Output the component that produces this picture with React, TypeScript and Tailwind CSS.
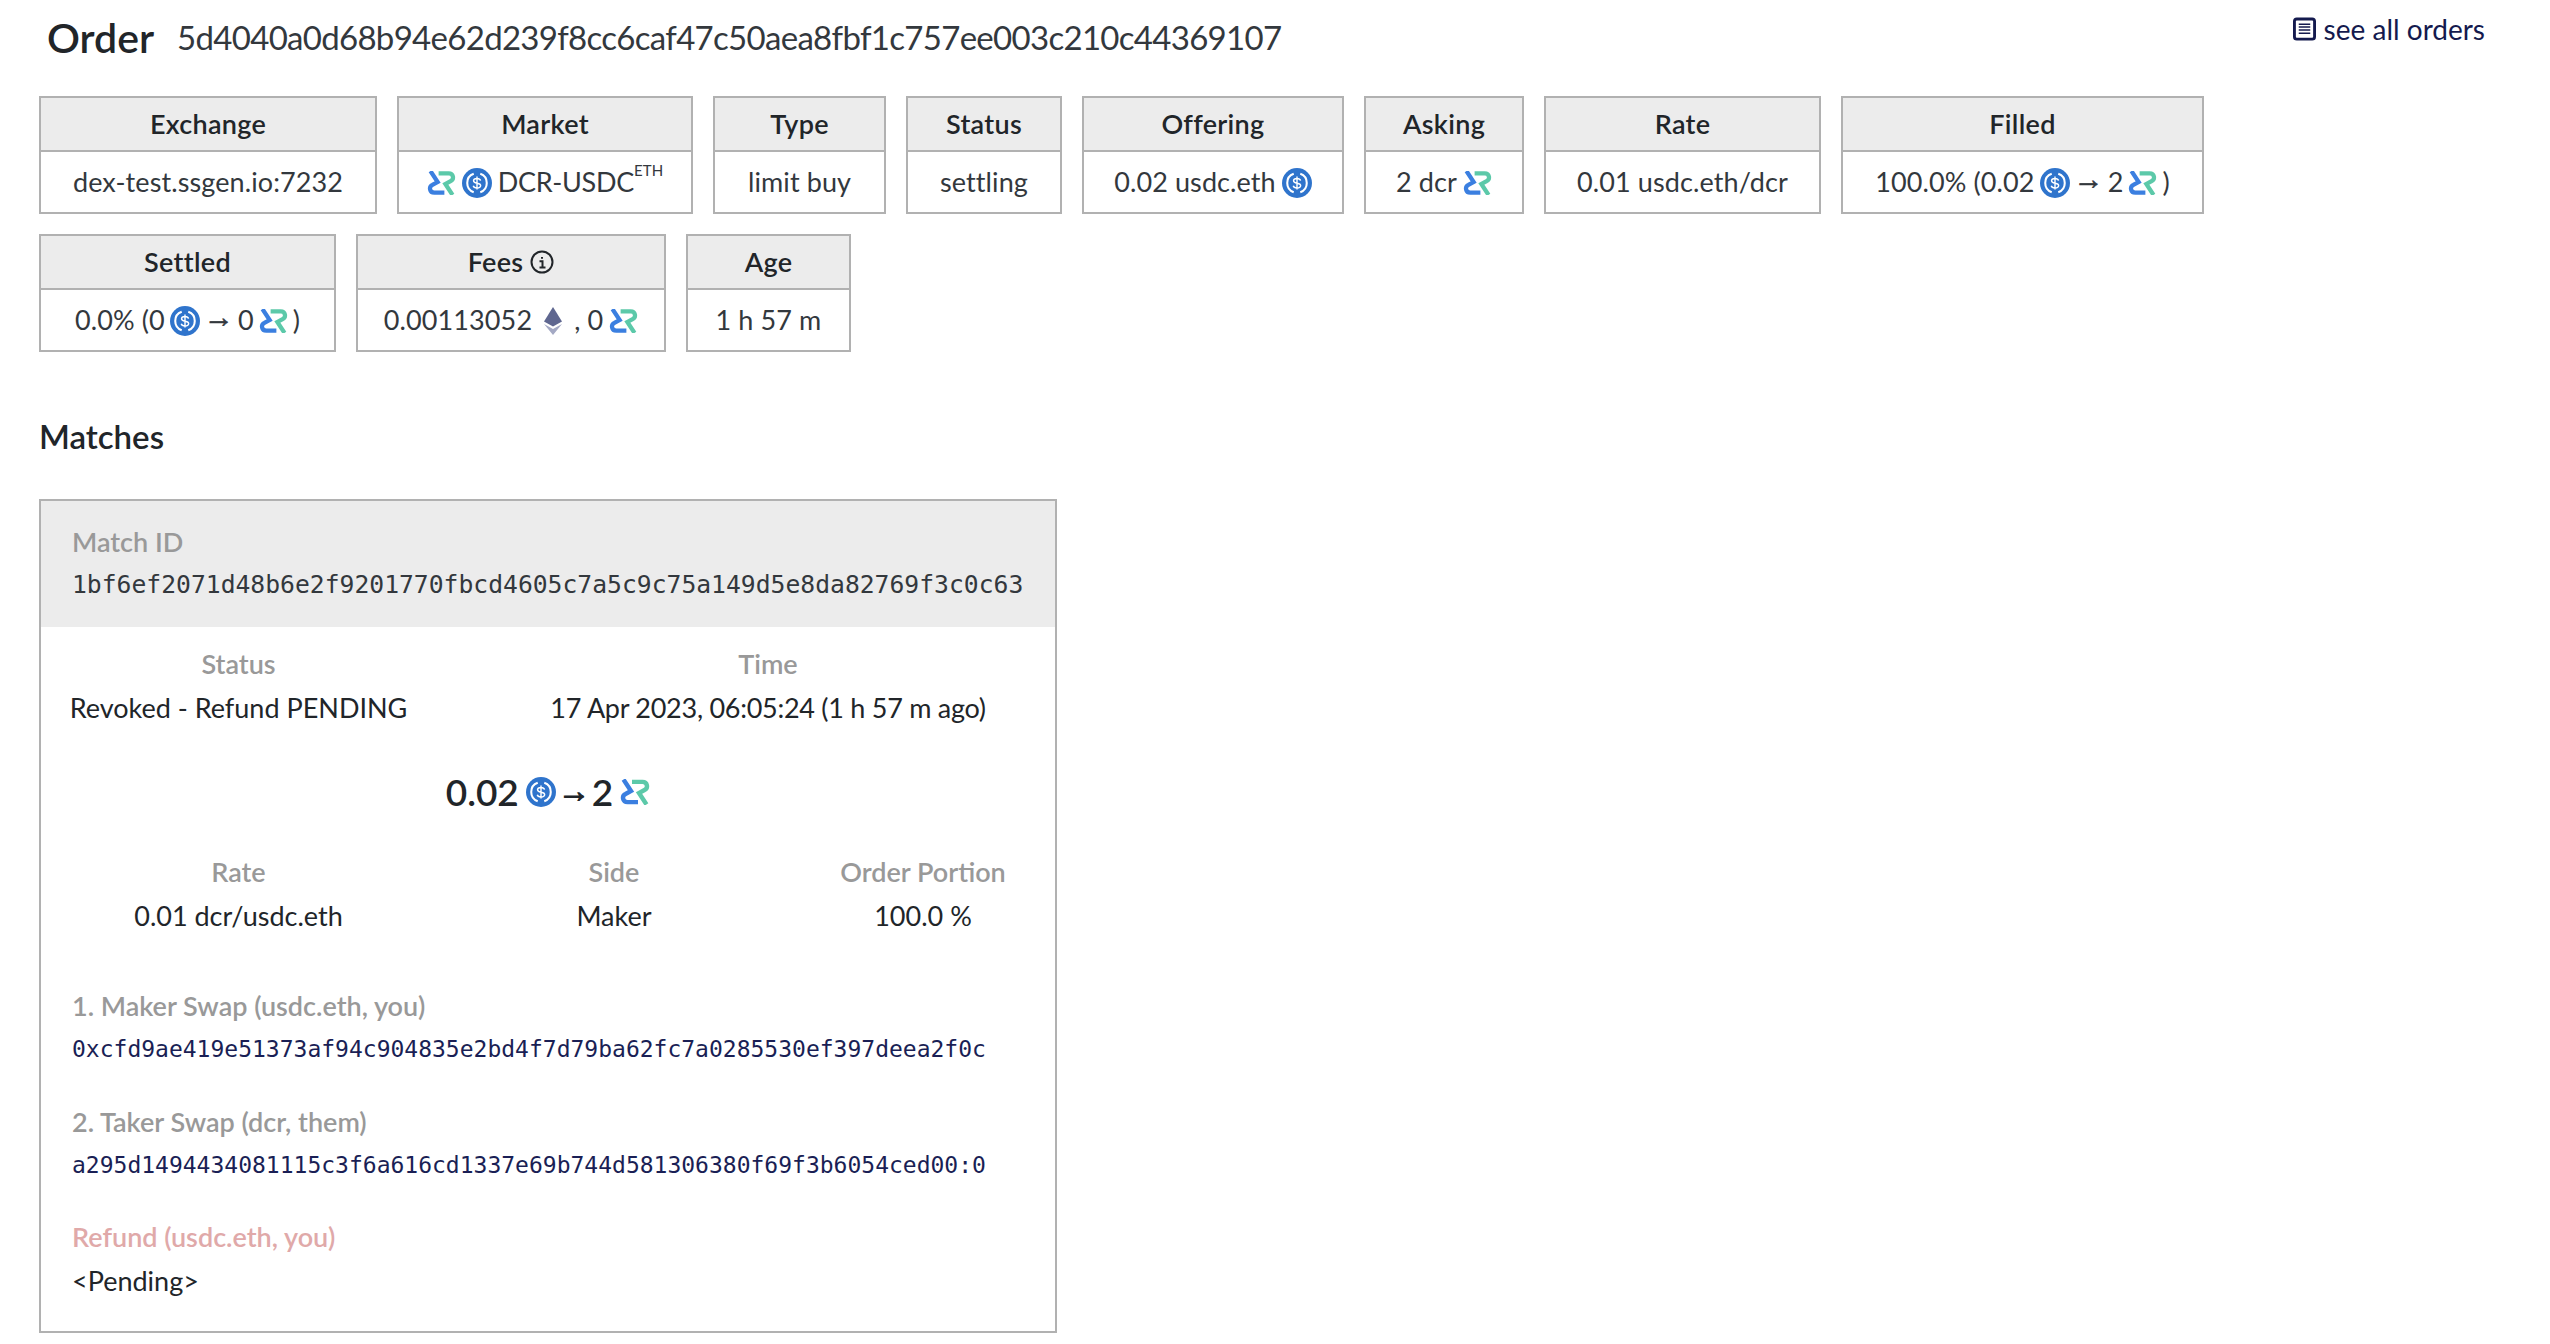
import React from 'react';

const font = "font-['Lato','Liberation_Sans',sans-serif]";

const Dcr = ({ className = 'w-[29px] h-[24px]' }: { className?: string }) => (
  <svg viewBox="0 0 30 25" className={`inline-block shrink-0 ${className}`} fill="none" strokeWidth="4.400">
    <path d="M12 2.400H22.500C27.500 2.400 28.500 8.500 24.500 10.500L19 13.500L26.500 25" stroke="#5cc9a9" />
    <path d="M18 22.600H7.500C2.500 22.600 1.500 16.500 5.500 14.500L11 11.500L3.500 0" stroke="#3b7fe0" />
  </svg>
);

const Usdc = ({ className = 'w-[30px] h-[30px]' }: { className?: string }) => (
  <svg viewBox="0 0 32 32" className={`inline-block shrink-0 ${className}`} fill="none">
    <circle cx="16" cy="16" r="16" fill="#2f74cc" />
    <path d="M12.500 6.200a10.400 10.400 0 0 0 0 19.600M19.500 6.200a10.400 10.400 0 0 1 0 19.600" stroke="#fff" strokeWidth="2.200" />
    <path d="M19.800 13.400c-.4-1.500-1.900-2.200-3.800-2.200-2.200 0-3.700 1-3.700 2.500 0 3.700 7.600 1.500 7.600 5 0 1.600-1.600 2.600-3.900 2.600-2.100 0-3.600-.8-4-2.400M16 9v14" stroke="#fff" strokeWidth="1.500" />
  </svg>
);

const Eth = () => (
  <svg viewBox="0 0 18 28" className="inline-block shrink-0 w-[18px] h-[28px]">
    <path d="M9 0 0 14.500 9 19.500 18 14.500Z" fill="#5f6790" />
    <path d="M0 17 9 28 18 17 9 22Z" fill="#a4a9c4" />
  </svg>
);

const InfoIcon = () => (
  <svg viewBox="0 0 24 24" className="inline-block w-[24px] h-[24px] ml-[7px]" fill="none" stroke="#212529" strokeWidth="2">
    <circle cx="12" cy="12" r="10.500" />
    <path d="M12 7v1.800M9.500 11.300H12.500V17M9.500 17.500h6" />
  </svg>
);

const ListIcon = () => (
  <svg viewBox="0 0 24 24" className="w-[23px] h-[24px] mr-[8px]" fill="none" stroke="#141a4e">
    <rect x="1.500" y="1.500" width="21" height="21" rx="2.500" strokeWidth="3" />
    <path d="M6 7h12M6 10h12M6 13h12M6 16.500h12" strokeWidth="1.500" />
  </svg>
);

const Arrow = () => (
  <span className="mx-[4px] -mt-[8px] font-['Liberation_Sans',sans-serif] text-[30px] font-bold [-webkit-text-stroke:0.6px_#33383d]">→</span>
);

const Cell = ({ label, width, children }: { label: React.ReactNode; width: string; children: React.ReactNode }) => (
  <div className={`${width} h-[118px] border-2 border-[#b1b1b1] flex flex-col`}>
    <div className="h-[54px] shrink-0 bg-[#ececec] border-b-2 border-[#b1b1b1] flex items-center justify-center font-semibold text-[#212529] tracking-[0.3px]">
      {label}
    </div>
    <div className="flex-1 flex items-center justify-center text-[#33383d] whitespace-nowrap pt-[1px] tracking-[0.1px]">{children}</div>
  </div>
);

const Label = ({ children }: { children: React.ReactNode }) => (
  <div className="h-[42px] flex items-center text-[#999999] font-semibold">{children}</div>
);

const Value = ({ children, className = '' }: { children: React.ReactNode; className?: string }) => (
  <div className={`h-[42px] leading-[45px] ${className}`}>{children}</div>
);

const Hash = ({ children }: { children: React.ReactNode }) => (
  <div className="h-[42px] pt-[3px] flex items-center font-['DejaVu_Sans_Mono',monospace] text-[23px] text-[#1a1f55] whitespace-nowrap">
    {children}
  </div>
);

export default function App() {
  return (
    <div className={`${font} bg-white w-[2550px] h-[1344px] overflow-hidden pl-[39px] text-[27px] text-[#212529]`}>
      {/* Title */}
      <div className="h-[96px] flex justify-between pl-[8px] pr-[65px]">
        <div className="flex items-center h-[76px]">
          <h1 className="text-[41px] font-semibold">Order</h1>
          <span className="ml-[23px] text-[33px] tracking-[-0.7px] text-[#33383d]">
            5d4040a0d68b94e62d239f8cc6caf47c50aea8fbf1c757ee003c210c44369107
          </span>
        </div>
        <a className="flex items-center h-[58px] text-[#141a4e] text-[28px]">
          <ListIcon />
          see all orders
        </a>
      </div>

      {/* Order summary */}
      <div className="flex gap-[20px]">
        <Cell label="Exchange" width="w-[338px]">dex-test.ssgen.io:7232</Cell>
        <Cell label="Market" width="w-[296px]">
          <Dcr />
          <span className="w-[6px]" />
          <Usdc />
          <span className="ml-[6px] tracking-[-0.3px]">DCR-USDC</span>
          <sup className="text-[15px] -mt-[10px]">ETH</sup>
        </Cell>
        <Cell label="Type" width="w-[173px]">limit buy</Cell>
        <Cell label="Status" width="w-[156px]">settling</Cell>
        <Cell label="Offering" width="w-[262px]">
          0.02 usdc.eth
          <span className="w-[6px]" />
          <Usdc />
        </Cell>
        <Cell label="Asking" width="w-[160px]">
          2 dcr
          <span className="w-[6px]" />
          <Dcr />
        </Cell>
        <Cell label="Rate" width="w-[277px]">0.01 usdc.eth/dcr</Cell>
        <Cell label="Filled" width="w-[363px]">
          100.0% (0.02
          <span className="w-[5px]" />
          <Usdc />
          <Arrow />2
          <span className="w-[5px]" />
          <Dcr />
          <span className="ml-[5px]">)</span>
        </Cell>
      </div>
      <div className="flex gap-[20px] mt-[20px]">
        <Cell label="Settled" width="w-[297px]">
          0.0% (0
          <span className="w-[5px]" />
          <Usdc />
          <Arrow />0
          <span className="w-[5px]" />
          <Dcr />
          <span className="ml-[5px]">)</span>
        </Cell>
        <Cell
          label={
            <>
              Fees
              <InfoIcon />
            </>
          }
          width="w-[310px]"
        >
          0.00113052
          <span className="w-[12px]" />
          <Eth />
          <span className="w-[12px]" />, 0
          <span className="w-[6px]" />
          <Dcr />
        </Cell>
        <Cell label="Age" width="w-[165px]">1 h 57 m</Cell>
      </div>

      {/* Matches */}
      <h2 className="mt-[64px] h-[42px] flex items-center text-[33px] font-semibold">Matches</h2>

      <div className="mt-[41px] w-[1018px] h-[834px] border-2 border-[#b1b1b1]">
        <div className="h-[126px] bg-[#ececec] pt-[20px] pl-[31px]">
          <Label>Match ID</Label>
          <div className="h-[42px] pt-[2px] flex items-center font-['DejaVu_Sans_Mono',monospace] text-[24.700px] text-[#33383d] whitespace-nowrap">
            1bf6ef2071d48b6e2f9201770fbcd4605c7a5c9c75a149d5e8da82769f3c0c63
          </div>
        </div>

        <div className="grid grid-cols-[395px_464px] gap-x-[100px] text-center mt-[16px]">
          <div>
            <Label><span className="mx-auto">Status</span></Label>
            <Value>Revoked - Refund PENDING</Value>
          </div>
          <div>
            <Label><span className="mx-auto">Time</span></Label>
            <Value className="tracking-[-0.27px]">17 Apr 2023, 06:05:24 (1 h 57 m ago)</Value>
          </div>
        </div>

        <div className="mt-[44px] h-[42px] flex items-center justify-center text-[37px] font-semibold gap-[7px]">
          0.02
          <Usdc />
          <span className="-mx-[5px] -mt-[2px] font-['Liberation_Sans',sans-serif] text-[32px] font-bold [-webkit-text-stroke:1.200px_#212529]">→</span>2
          <Dcr className="w-[30px] h-[26px]" />
        </div>

        <div className="flex text-center mt-[38px]">
          <div className="w-[395px]">
            <Label><span className="mx-auto">Rate</span></Label>
            <Value>0.01 dcr/usdc.eth</Value>
          </div>
          <div className="ml-[78px] w-[200px]">
            <Label><span className="mx-auto">Side</span></Label>
            <Value>Maker</Value>
          </div>
          <div className="ml-[109px] w-[200px]">
            <Label><span className="mx-auto">Order Portion</span></Label>
            <Value>100.0 %</Value>
          </div>
        </div>

        <div className="pl-[31px] mt-[50px]">
          <Label>1. Maker Swap (usdc.eth, you)</Label>
          <Hash>0xcfd9ae419e51373af94c904835e2bd4f7d79ba62fc7a0285530ef397deea2f0c</Hash>
          <div className="mt-[32px]">
            <Label>2. Taker Swap (dcr, them)</Label>
            <Hash>a295d1494434081115c3f6a616cd1337e69b744d581306380f69f3b6054ced00:0</Hash>
          </div>
          <div className="mt-[31px] h-[42px] flex items-center text-[#e0a9a9] font-semibold">Refund (usdc.eth, you)</div>
          <Value>{'<Pending>'}</Value>
        </div>
      </div>
    </div>
  );
}
